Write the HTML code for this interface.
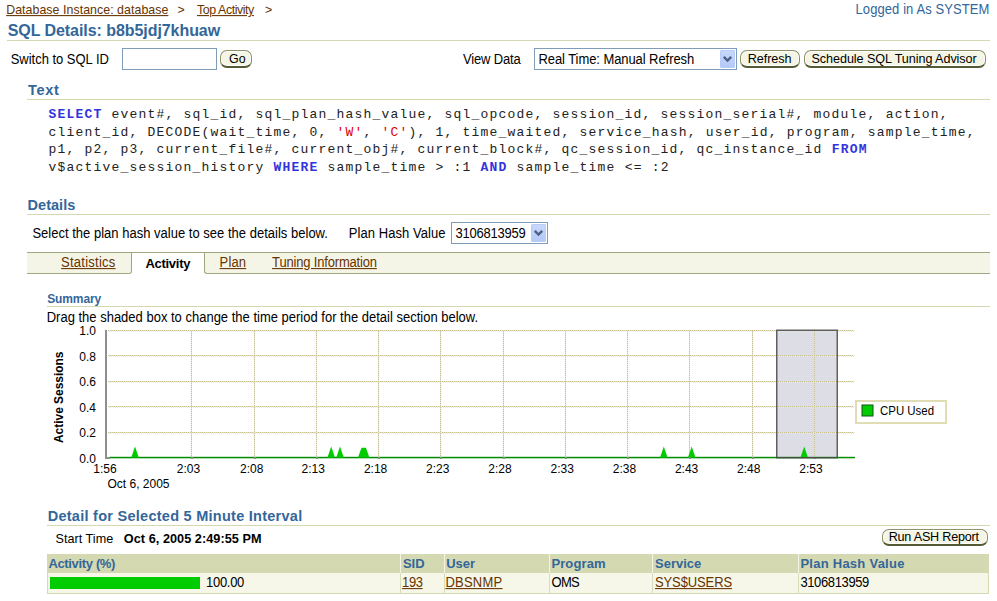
<!DOCTYPE html>
<html><head><meta charset="utf-8"><title>SQL Details</title>
<style>
html,body{margin:0;padding:0;background:#fff;width:997px;height:601px;overflow:hidden;position:relative;font-family:"Liberation Sans",sans-serif}
.t{position:absolute;white-space:nowrap;color:#000}
.mono{font-family:"Liberation Mono",monospace;font-size:13px;line-height:15px;letter-spacing:1.2px;color:#222}
.k{color:#3333DD;font-weight:bold}
.s{color:#DD0000}
.btn{position:absolute;box-sizing:border-box;border:1px solid #8B9068;border-bottom:2px solid #555A35;border-radius:7px;background:#F5F5E6;box-shadow:inset 0 0 0 1px #fff}
.dd{position:absolute;background:linear-gradient(#C9D8FC,#B2C8F8);border-radius:2px;box-shadow:inset 0 0 0 1px #B8CCF7}
</style></head><body>
<div class="t" style="left:6.20px;top:3px;font-size:12.4px;line-height:14px;color:#663300;letter-spacing:0.038px;transform:scaleY(1.06);transform-origin:0 11px;"><u>Database Instance: database</u></div>
<div class="t" style="left:177.50px;top:3px;font-size:12.4px;line-height:14px;color:#663300;transform:scaleY(1.06);transform-origin:0 11px;">&gt;</div>
<div class="t" style="left:197.00px;top:3px;font-size:12.4px;line-height:14px;color:#663300;letter-spacing:-0.424px;transform:scaleY(1.06);transform-origin:0 11px;"><u>Top Activity</u></div>
<div class="t" style="left:265.00px;top:3px;font-size:12.4px;line-height:14px;color:#663300;transform:scaleY(1.06);transform-origin:0 11px;">&gt;</div>
<div class="t" style="left:855.50px;top:2px;font-size:13px;line-height:15px;color:#336699;letter-spacing:0.093px;transform:scaleY(1.06);transform-origin:0 12px;">Logged in As SYSTEM</div>
<div class="t" style="left:7.70px;top:22px;font-size:16px;line-height:17px;font-weight:bold;color:#336699;letter-spacing:-0.061px;">SQL Details: b8b5jdj7khuaw</div>
<div style="position:absolute;left:7px;top:40px;width:983px;height:1px;background:#D5D8B0"></div>
<div class="t" style="left:10.70px;top:52px;font-size:13px;line-height:15px;letter-spacing:-0.019px;transform:scaleY(1.06);transform-origin:0 12px;">Switch to SQL ID</div>
<div style="position:absolute;left:122px;top:48px;width:93px;height:20px;border:1px solid #7F9DB9;background:#fff"></div>
<div class="btn" style="left:220px;top:50px;width:32px;height:18px;"></div>
<div class="t" style="left:229.00px;top:52px;font-size:12.4px;line-height:14px;transform:scaleY(1.06);transform-origin:0 11px;">Go</div>
<div class="t" style="left:462.90px;top:52px;font-size:13px;line-height:15px;letter-spacing:-0.148px;transform:scaleY(1.06);transform-origin:0 12px;">View Data</div>
<div style="position:absolute;left:534px;top:48px;width:201px;height:20px;border:1px solid #7F9DB9;background:#fff"></div>
<div class="t" style="left:538.50px;top:52px;font-size:13px;line-height:15px;letter-spacing:-0.076px;transform:scaleY(1.06);transform-origin:0 12px;">Real Time: Manual Refresh</div>
<div class="dd" style="left:720px;top:50px;width:15px;height:18px"><svg width="15" height="18" viewBox="0 0 15 18" style="display:block"><path d="M3.8 6.8 L7.5 10.5 L11.2 6.8" stroke="#4D6185" stroke-width="2.4" fill="none"/></svg></div>
<div class="btn" style="left:740px;top:50px;width:60px;height:18px;"></div>
<div class="t" style="left:747.70px;top:52px;font-size:12.6px;line-height:14px;letter-spacing:-0.049px;transform:scaleY(1.06);transform-origin:0 11px;">Refresh</div>
<div class="btn" style="left:804px;top:50px;width:182px;height:18px;"></div>
<div class="t" style="left:811.50px;top:52px;font-size:12.6px;line-height:14px;letter-spacing:-0.063px;transform:scaleY(1.06);transform-origin:0 11px;">Schedule SQL Tuning Advisor</div>
<div class="t" style="left:28.00px;top:81.5px;font-size:14.5px;line-height:16px;font-weight:bold;color:#336699;letter-spacing:0.697px;">Text</div>
<div style="position:absolute;left:27px;top:99px;width:963px;height:1px;background:#D5D8B0"></div>
<div class="t mono" style="left:48.5px;top:107px;"><b class="k">SELECT</b> event#, sql_id, sql_plan_hash_value, sql_opcode, session_id, session_serial#, module, action,</div>
<div class="t mono" style="left:48.5px;top:125px;">client_id, DECODE(wait_time, 0, <span class="s">'W'</span>, <span class="s">'C'</span>), 1, time_waited, service_hash, user_id, program, sample_time,</div>
<div class="t mono" style="left:48.5px;top:142px;">p1, p2, p3, current_file#, current_obj#, current_block#, qc_session_id, qc_instance_id <b class="k">FROM</b></div>
<div class="t mono" style="left:48.5px;top:160px;">v$active_session_history <b class="k">WHERE</b> sample_time &gt; :1 <b class="k">AND</b> sample_time &lt;= :2</div>
<div class="t" style="left:27.60px;top:197px;font-size:14.5px;line-height:16px;font-weight:bold;color:#336699;letter-spacing:0.019px;">Details</div>
<div style="position:absolute;left:27px;top:214px;width:963px;height:1px;background:#D5D8B0"></div>
<div class="t" style="left:32.40px;top:226px;font-size:13px;line-height:15px;letter-spacing:0.013px;transform:scaleY(1.06);transform-origin:0 12px;">Select the plan hash value to see the details below.</div>
<div class="t" style="left:348.80px;top:226px;font-size:13px;line-height:15px;letter-spacing:0.061px;transform:scaleY(1.06);transform-origin:0 12px;">Plan Hash Value</div>
<div style="position:absolute;left:451px;top:222px;width:95px;height:20px;border:1px solid #7F9DB9;background:#fff"></div>
<div class="t" style="left:455.60px;top:226px;font-size:13px;line-height:15px;letter-spacing:-0.252px;transform:scaleY(1.06);transform-origin:0 12px;">3106813959</div>
<div class="dd" style="left:531px;top:224px;width:15px;height:18px"><svg width="15" height="18" viewBox="0 0 15 18" style="display:block"><path d="M3.8 6.8 L7.5 10.5 L11.2 6.8" stroke="#4D6185" stroke-width="2.4" fill="none"/></svg></div>
<div style="position:absolute;left:27px;top:252px;width:104px;height:20px;background:#F5F5E7;border-top:1px solid #A0A67F;border-bottom:1px solid #A0A67F;border-right:1px solid #A0A67F;border-bottom-right-radius:3px"></div>
<div style="position:absolute;left:132px;top:252px;width:72px;height:22px;background:#fff;border-top:1px solid #A0A67F;box-sizing:border-box"></div>
<div style="position:absolute;left:204px;top:252px;width:785px;height:20px;background:#F5F5E7;border-top:1px solid #A0A67F;border-bottom:1px solid #A0A67F;border-left:1px solid #A0A67F;border-bottom-left-radius:3px"></div>
<div class="t" style="left:61.10px;top:255px;font-size:13px;line-height:15px;color:#663300;letter-spacing:0.243px;transform:scaleY(1.06);transform-origin:0 12px;"><u>Statistics</u></div>
<div class="t" style="left:145.40px;top:256px;font-size:13px;line-height:15px;font-weight:bold;letter-spacing:-0.276px;">Activity</div>
<div class="t" style="left:219.60px;top:255px;font-size:13px;line-height:15px;color:#663300;letter-spacing:0.137px;transform:scaleY(1.06);transform-origin:0 12px;"><u>Plan</u></div>
<div class="t" style="left:272.10px;top:255px;font-size:13px;line-height:15px;color:#663300;letter-spacing:-0.175px;transform:scaleY(1.06);transform-origin:0 12px;"><u>Tuning Information</u></div>
<div class="t" style="left:47.20px;top:292px;font-size:12px;line-height:14px;font-weight:bold;color:#336699;letter-spacing:-0.120px;">Summary</div>
<div style="position:absolute;left:47px;top:306px;width:943px;height:1px;background:#D5D8B0"></div>
<div class="t" style="left:46.70px;top:310px;font-size:13px;line-height:15px;transform:scaleY(1.06);transform-origin:0 12px;">Drag the shaded box to change the time period for the detail section below.</div>
<div class="t" style="left:47.70px;top:508px;font-size:14.5px;line-height:16px;font-weight:bold;color:#336699;letter-spacing:0.266px;">Detail for Selected 5 Minute Interval</div>
<div style="position:absolute;left:47px;top:525px;width:943px;height:1px;background:#D5D8B0"></div>
<div class="t" style="left:55.60px;top:532px;font-size:12.6px;line-height:14px;letter-spacing:0.021px;transform:scaleY(1.06);transform-origin:0 11px;">Start Time</div>
<div class="t" style="left:123.80px;top:532px;font-size:12.7px;line-height:14px;font-weight:bold;letter-spacing:0.045px;">Oct 6, 2005 2:49:55 PM</div>
<div class="btn" style="left:882px;top:529px;width:106px;height:17px;"></div>
<div class="t" style="left:888.70px;top:530px;font-size:12.6px;line-height:14px;letter-spacing:-0.215px;transform:scaleY(1.06);transform-origin:0 11px;">Run ASH Report</div>
<div style="position:absolute;left:47px;top:554px;width:942px;height:19px;background:#D5D9B2"></div>
<div style="position:absolute;left:47px;top:573px;width:941px;height:20px;background:#F6F7E8;border-right:1px solid #D5D9B2;border-bottom:1px solid #D5D9B2"></div>
<div style="position:absolute;left:47px;top:573px;width:1px;height:21px;background:#D5D9B2"></div>
<div style="position:absolute;left:400px;top:554px;width:1px;height:19px;background:#F4F5E6"></div>
<div style="position:absolute;left:400px;top:573px;width:1px;height:21px;background:#D8DCB8"></div>
<div style="position:absolute;left:444px;top:554px;width:1px;height:19px;background:#F4F5E6"></div>
<div style="position:absolute;left:444px;top:573px;width:1px;height:21px;background:#D8DCB8"></div>
<div style="position:absolute;left:549px;top:554px;width:1px;height:19px;background:#F4F5E6"></div>
<div style="position:absolute;left:549px;top:573px;width:1px;height:21px;background:#D8DCB8"></div>
<div style="position:absolute;left:652px;top:554px;width:1px;height:19px;background:#F4F5E6"></div>
<div style="position:absolute;left:652px;top:573px;width:1px;height:21px;background:#D8DCB8"></div>
<div style="position:absolute;left:798px;top:554px;width:1px;height:19px;background:#F4F5E6"></div>
<div style="position:absolute;left:798px;top:573px;width:1px;height:21px;background:#D8DCB8"></div>
<div class="t" style="left:48.40px;top:556px;font-size:13px;line-height:15px;font-weight:bold;color:#336699;letter-spacing:-0.342px;">Activity (%)</div>
<div class="t" style="left:402.90px;top:556px;font-size:13px;line-height:15px;font-weight:bold;color:#336699;">SID</div>
<div class="t" style="left:446.20px;top:556px;font-size:13px;line-height:15px;font-weight:bold;color:#336699;">User</div>
<div class="t" style="left:551.40px;top:556px;font-size:13px;line-height:15px;font-weight:bold;color:#336699;letter-spacing:0.117px;">Program</div>
<div class="t" style="left:655.00px;top:556px;font-size:13px;line-height:15px;font-weight:bold;color:#336699;">Service</div>
<div class="t" style="left:800.40px;top:556px;font-size:13px;line-height:15px;font-weight:bold;color:#336699;letter-spacing:0.257px;">Plan Hash Value</div>
<div style="position:absolute;left:50px;top:577px;width:150px;height:12px;background:#00CC00"></div>
<div class="t" style="left:206.00px;top:575px;font-size:13px;line-height:15px;letter-spacing:-0.286px;transform:scaleY(1.06);transform-origin:0 12px;">100.00</div>
<div class="t" style="left:402.10px;top:575px;font-size:13px;line-height:15px;color:#663300;letter-spacing:-0.380px;transform:scaleY(1.06);transform-origin:0 12px;"><u>193</u></div>
<div class="t" style="left:445.40px;top:575px;font-size:13px;line-height:15px;color:#663300;letter-spacing:0.251px;transform:scaleY(1.06);transform-origin:0 12px;"><u>DBSNMP</u></div>
<div class="t" style="left:551.60px;top:575px;font-size:13px;line-height:15px;letter-spacing:-0.720px;transform:scaleY(1.06);transform-origin:0 12px;">OMS</div>
<div class="t" style="left:655.00px;top:575px;font-size:13px;line-height:15px;color:#663300;letter-spacing:-0.120px;transform:scaleY(1.06);transform-origin:0 12px;"><u>SYS$USERS</u></div>
<div class="t" style="left:800.40px;top:575px;font-size:13px;line-height:15px;letter-spacing:-0.374px;transform:scaleY(1.06);transform-origin:0 12px;">3106813959</div>
<svg style="position:absolute;left:0;top:0" width="997" height="601" viewBox="0 0 997 601"><rect x="776" y="330" width="62" height="128" fill="#DDDDE6"/><line x1="108" y1="330.5" x2="854" y2="330.5" stroke="#E2E2DC" stroke-width="1"/><line x1="108" y1="330.5" x2="854" y2="330.5" stroke="#C8C28A" stroke-width="1" stroke-dasharray="1 1"/><line x1="109" y1="331.5" x2="854" y2="331.5" stroke="#E6E6E0" stroke-width="1" stroke-dasharray="1 1" opacity="0.8"/><line x1="108" y1="355.5" x2="854" y2="355.5" stroke="#E2E2DC" stroke-width="1"/><line x1="108" y1="355.5" x2="854" y2="355.5" stroke="#C8C28A" stroke-width="1" stroke-dasharray="1 1"/><line x1="109" y1="356.5" x2="854" y2="356.5" stroke="#E6E6E0" stroke-width="1" stroke-dasharray="1 1" opacity="0.8"/><line x1="108" y1="381.5" x2="854" y2="381.5" stroke="#E2E2DC" stroke-width="1"/><line x1="108" y1="381.5" x2="854" y2="381.5" stroke="#C8C28A" stroke-width="1" stroke-dasharray="1 1"/><line x1="109" y1="382.5" x2="854" y2="382.5" stroke="#E6E6E0" stroke-width="1" stroke-dasharray="1 1" opacity="0.8"/><line x1="108" y1="406.5" x2="854" y2="406.5" stroke="#E2E2DC" stroke-width="1"/><line x1="108" y1="406.5" x2="854" y2="406.5" stroke="#C8C28A" stroke-width="1" stroke-dasharray="1 1"/><line x1="109" y1="407.5" x2="854" y2="407.5" stroke="#E6E6E0" stroke-width="1" stroke-dasharray="1 1" opacity="0.8"/><line x1="108" y1="432.5" x2="854" y2="432.5" stroke="#E2E2DC" stroke-width="1"/><line x1="108" y1="432.5" x2="854" y2="432.5" stroke="#C8C28A" stroke-width="1" stroke-dasharray="1 1"/><line x1="109" y1="433.5" x2="854" y2="433.5" stroke="#E6E6E0" stroke-width="1" stroke-dasharray="1 1" opacity="0.8"/><line x1="191.5" y1="331" x2="191.5" y2="457" stroke="#E2E2DC" stroke-width="1"/><line x1="191.5" y1="331" x2="191.5" y2="457" stroke="#C8C28A" stroke-width="1" stroke-dasharray="1 1"/><line x1="254.5" y1="331" x2="254.5" y2="457" stroke="#E2E2DC" stroke-width="1"/><line x1="254.5" y1="331" x2="254.5" y2="457" stroke="#C8C28A" stroke-width="1" stroke-dasharray="1 1"/><line x1="316.5" y1="331" x2="316.5" y2="457" stroke="#E2E2DC" stroke-width="1"/><line x1="316.5" y1="331" x2="316.5" y2="457" stroke="#C8C28A" stroke-width="1" stroke-dasharray="1 1"/><line x1="378.5" y1="331" x2="378.5" y2="457" stroke="#E2E2DC" stroke-width="1"/><line x1="378.5" y1="331" x2="378.5" y2="457" stroke="#C8C28A" stroke-width="1" stroke-dasharray="1 1"/><line x1="440.5" y1="331" x2="440.5" y2="457" stroke="#E2E2DC" stroke-width="1"/><line x1="440.5" y1="331" x2="440.5" y2="457" stroke="#C8C28A" stroke-width="1" stroke-dasharray="1 1"/><line x1="503.5" y1="331" x2="503.5" y2="457" stroke="#E2E2DC" stroke-width="1"/><line x1="503.5" y1="331" x2="503.5" y2="457" stroke="#C8C28A" stroke-width="1" stroke-dasharray="1 1"/><line x1="565.5" y1="331" x2="565.5" y2="457" stroke="#E2E2DC" stroke-width="1"/><line x1="565.5" y1="331" x2="565.5" y2="457" stroke="#C8C28A" stroke-width="1" stroke-dasharray="1 1"/><line x1="627.5" y1="331" x2="627.5" y2="457" stroke="#E2E2DC" stroke-width="1"/><line x1="627.5" y1="331" x2="627.5" y2="457" stroke="#C8C28A" stroke-width="1" stroke-dasharray="1 1"/><line x1="689.5" y1="331" x2="689.5" y2="457" stroke="#E2E2DC" stroke-width="1"/><line x1="689.5" y1="331" x2="689.5" y2="457" stroke="#C8C28A" stroke-width="1" stroke-dasharray="1 1"/><line x1="752.5" y1="331" x2="752.5" y2="457" stroke="#E2E2DC" stroke-width="1"/><line x1="752.5" y1="331" x2="752.5" y2="457" stroke="#C8C28A" stroke-width="1" stroke-dasharray="1 1"/><line x1="814.5" y1="331" x2="814.5" y2="457" stroke="#E2E2DC" stroke-width="1"/><line x1="814.5" y1="331" x2="814.5" y2="457" stroke="#C8C28A" stroke-width="1" stroke-dasharray="1 1"/><rect x="105" y="330" width="2" height="129" fill="#8E8E8E"/><rect x="105" y="457" width="5" height="2" fill="#8E8E8E"/><rect x="110" y="456.8" width="745" height="1.5" fill="#008C00"/><polygon points="131.25,457.5 135.0,446.5 135.0,446.5 138.75,457.5" fill="#00CC00"/><polygon points="327.45,457.5 331.2,446.5 331.2,446.5 334.95,457.5" fill="#00CC00"/><polygon points="336.25,457.5 340.0,446.5 340.0,446.5 343.75,457.5" fill="#00CC00"/><polygon points="660.05,457.5 663.8,446.5 663.8,446.5 667.55,457.5" fill="#00CC00"/><polygon points="687.95,457.5 691.7,446.5 691.7,446.5 695.45,457.5" fill="#00CC00"/><polygon points="800.45,457.5 804.2,446.5 804.2,446.5 807.95,457.5" fill="#00CC00"/><polygon points="358.0,457.5 361.5,447.8 365.9,447.8 369.4,457.5" fill="#00CC00"/><rect x="191" y="457" width="2" height="2" fill="#8C8C8C"/><rect x="254" y="457" width="2" height="2" fill="#8C8C8C"/><rect x="316" y="457" width="2" height="2" fill="#8C8C8C"/><rect x="378" y="457" width="2" height="2" fill="#8C8C8C"/><rect x="440" y="457" width="2" height="2" fill="#8C8C8C"/><rect x="503" y="457" width="2" height="2" fill="#8C8C8C"/><rect x="565" y="457" width="2" height="2" fill="#8C8C8C"/><rect x="627" y="457" width="2" height="2" fill="#8C8C8C"/><rect x="689" y="457" width="2" height="2" fill="#8C8C8C"/><rect x="752" y="457" width="2" height="2" fill="#8C8C8C"/><rect x="814" y="457" width="2" height="2" fill="#8C8C8C"/><rect x="776.75" y="330.25" width="60.5" height="127.5" fill="none" stroke="#4A4A4A" stroke-width="1.5" stroke-opacity="0.85"/><rect x="856" y="401" width="90" height="22" fill="#fff" stroke="#E0DDB4" stroke-width="2"/><rect x="862" y="405" width="11" height="11" fill="#00CC00" stroke="#115511" stroke-width="1"/><text x="880" y="414.5" font-size="12" font-family="Liberation Sans" textLength="54" lengthAdjust="spacingAndGlyphs">CPU Used</text><text x="96" y="335" font-size="12" text-anchor="end" font-family="Liberation Sans">1.0</text><text x="96" y="360.5" font-size="12" text-anchor="end" font-family="Liberation Sans">0.8</text><text x="96" y="386" font-size="12" text-anchor="end" font-family="Liberation Sans">0.6</text><text x="96" y="411.5" font-size="12" text-anchor="end" font-family="Liberation Sans">0.4</text><text x="96" y="437" font-size="12" text-anchor="end" font-family="Liberation Sans">0.2</text><text x="96" y="463" font-size="12" text-anchor="end" font-family="Liberation Sans">0.0</text><text x="105" y="473" font-size="12" text-anchor="middle" font-family="Liberation Sans">1:56</text><text x="188.5" y="473" font-size="12" text-anchor="middle" font-family="Liberation Sans">2:03</text><text x="251.7" y="473" font-size="12" text-anchor="middle" font-family="Liberation Sans">2:08</text><text x="313.3" y="473" font-size="12" text-anchor="middle" font-family="Liberation Sans">2:13</text><text x="375.6" y="473" font-size="12" text-anchor="middle" font-family="Liberation Sans">2:18</text><text x="437.8" y="473" font-size="12" text-anchor="middle" font-family="Liberation Sans">2:23</text><text x="500" y="473" font-size="12" text-anchor="middle" font-family="Liberation Sans">2:28</text><text x="562.2" y="473" font-size="12" text-anchor="middle" font-family="Liberation Sans">2:33</text><text x="624.4" y="473" font-size="12" text-anchor="middle" font-family="Liberation Sans">2:38</text><text x="686.6" y="473" font-size="12" text-anchor="middle" font-family="Liberation Sans">2:43</text><text x="748.8" y="473" font-size="12" text-anchor="middle" font-family="Liberation Sans">2:48</text><text x="811" y="473" font-size="12" text-anchor="middle" font-family="Liberation Sans">2:53</text><text x="107.5" y="488" font-size="12" font-family="Liberation Sans">Oct 6, 2005</text><text transform="translate(63,443) rotate(-90)" font-size="12" font-weight="bold" font-family="Liberation Sans" textLength="91.5" lengthAdjust="spacingAndGlyphs">Active Sessions</text></svg>
</body></html>
